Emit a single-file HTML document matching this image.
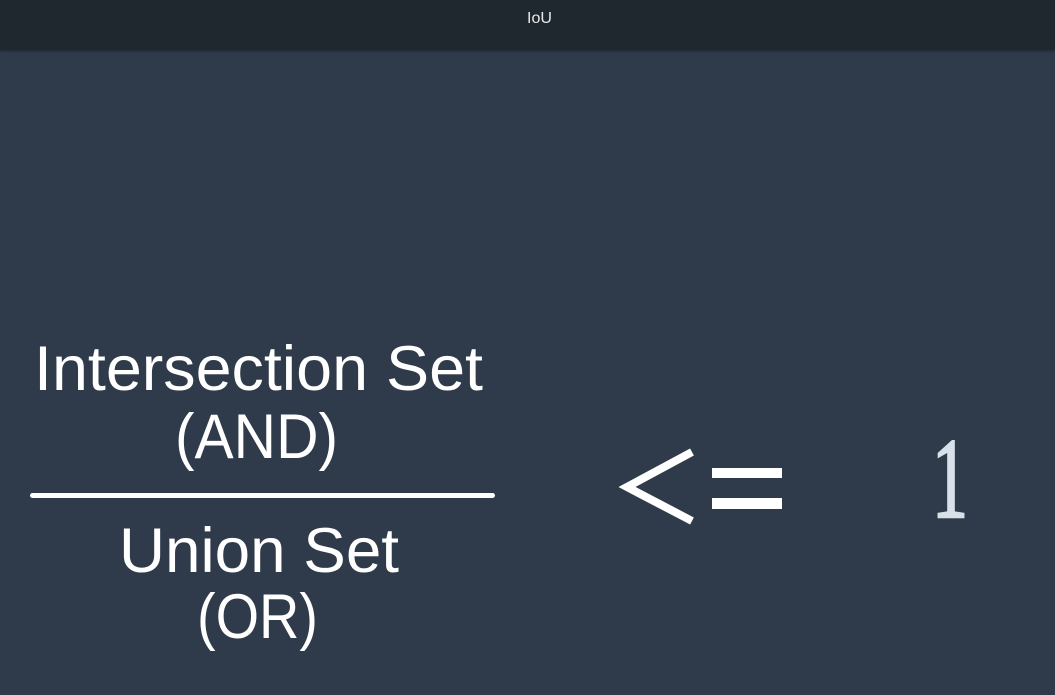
<!DOCTYPE html>
<html><head><style>
html,body{margin:0;padding:0;width:1055px;height:695px;overflow:hidden;background:#2f3b4a;}
.hdr{position:absolute;left:0;top:0;width:1055px;height:50px;background:#1f272f;box-shadow:0 1px 3px rgba(0,0,0,.4);}
.hdr span{position:absolute;left:527px;top:10px;color:#e8eaec;font:16px "Liberation Sans",sans-serif;}
svg{position:absolute;left:0;top:0;}
</style></head><body>
<div class="hdr"><span>IoU</span></div>
<svg width="1055" height="695" viewBox="0 0 1055 695">
<g fill="#ffffff" font-family="Liberation Sans, sans-serif" font-size="63">
<text x="34" y="390" textLength="449" lengthAdjust="spacingAndGlyphs">Intersection Set</text>
<text x="175" y="458" textLength="163" lengthAdjust="spacingAndGlyphs">(AND)</text>
<text x="119" y="572" textLength="280" lengthAdjust="spacingAndGlyphs">Union Set</text>
<text x="197" y="638" textLength="121" lengthAdjust="spacingAndGlyphs">(OR)</text>
</g>
<rect x="30" y="493" width="465" height="5" rx="2.5" fill="#fff"/>
<polyline points="692,452 627,487 692,521" fill="none" stroke="#fff" stroke-width="8"/>
<rect x="712" y="468" width="70" height="10" fill="#fff"/>
<rect x="712" y="498" width="70" height="11" fill="#fff"/>
<text x="932" y="517" fill="#d8e0ea" font-family="Liberation Serif, serif" font-size="114" stroke="#d8e0ea" stroke-width="2.5" textLength="36" lengthAdjust="spacingAndGlyphs">1</text>
</svg>
</body></html>
